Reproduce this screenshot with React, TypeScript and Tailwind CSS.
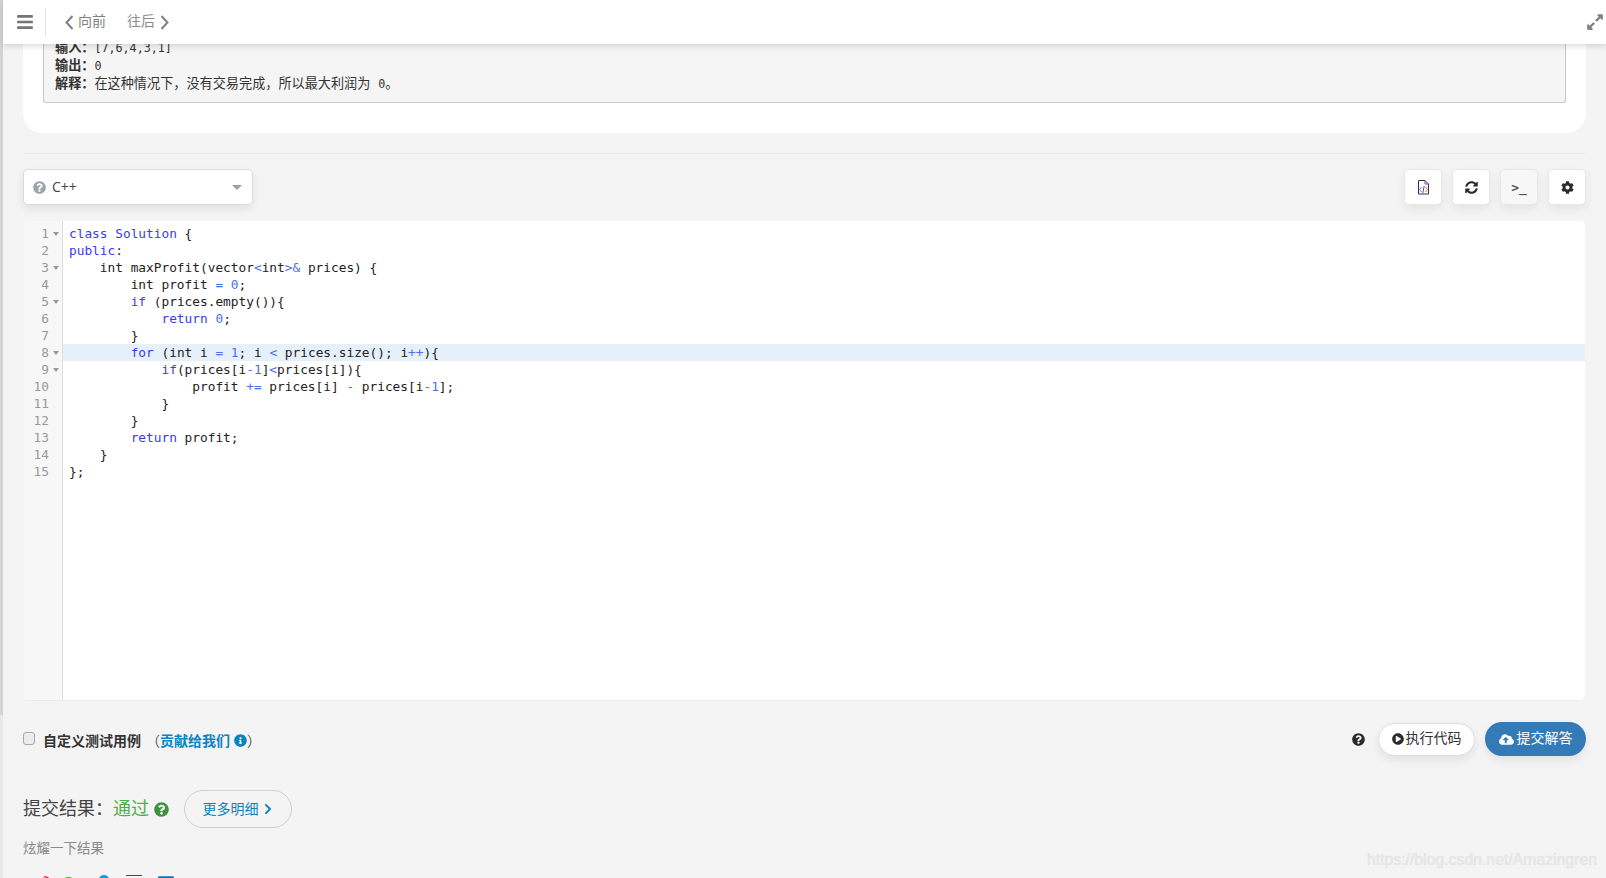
import React from "react";
import { FaBars, FaQuestionCircle, FaSyncAlt, FaCog, FaPlayCircle, FaCloudUploadAlt, FaChevronRight, FaInfoCircle, FaWeibo, FaWeixin, FaQq, FaLinkedin, FaExpandAlt } from "react-icons/fa";

const K = ({ c }: { c: string }) => <span className="text-[#3a3af0]">{c}</span>;
const N = ({ c }: { c: string }) => <span className="text-[#4a6fe8]">{c}</span>;
const L = ({ c }: { c: string }) => <span className="text-[11.7px]">{c}</span>;

const COLON = "\uFF1A";
const COMMA = "\uFF0C";
const LP = "\uFF08";
const RP = "\uFF09";

const lines: React.ReactNode[] = [
  <><K c="class" /> <K c="Solution" /> {"{"}</>,
  <><K c="public" />:</>,
  <>{"    int maxProfit(vector"}<N c="<" />int<N c=">&" />{" prices) {"}</>,
  <>{"        int profit "}<N c="=" /> <N c="0" />;</>,
  <>{"        "}<K c="if" />{" (prices.empty()){"}</>,
  <>{"            "}<K c="return" /> <N c="0" />;</>,
  <>{"        }"}</>,
  <>{"        "}<K c="for" />{" (int i "}<N c="=" /> <N c="1" />{"; i "}<N c="<" />{" prices.size(); i"}<N c="++" />{"){"}</>,
  <>{"            "}<K c="if" />{"(prices[i"}<N c="-1" />{"]"}<N c="<" />{"prices[i]){"}</>,
  <>{"                profit "}<N c="+=" />{" prices[i] "}<N c="-" />{" prices[i"}<N c="-1" />{"];"}</>,
  <>{"            }"}</>,
  <>{"        }"}</>,
  <>{"        "}<K c="return" />{" profit;"}</>,
  <>{"    }"}</>,
  <>{"};"}</>,
];
const folds = [1, 3, 5, 8, 9];

const FileCode = () => (
  <svg width="13" height="15" viewBox="0 0 13 15" fill="none">
    <path d="M1.5 .5h6.5l3.5 3.5v10h-10z" stroke="#3b2a55" strokeWidth="1" />
    <path d="M8 .5v3.5h3.5" stroke="#8a3fa0" strokeWidth="1" />
    <path d="M4.5 7l-2 2.5 2 2.5" stroke="#4a7fc0" strokeWidth="1" />
    <path d="M8.5 7l2 2.5-2 2.5" stroke="#c07a3a" strokeWidth="1" />
    <path d="M7.2 6l-1.4 7" stroke="#4a5a9a" strokeWidth="1" />
  </svg>
);

const Chevron = ({ right, className }: { right?: boolean; className: string }) => (
  <svg width="9" height="15" viewBox="0 0 9 15" fill="none" className={className}>
    <path d={right ? "M1.5 1L7.5 7.5L1.5 14" : "M7.5 1L1.5 7.5L7.5 14"} stroke="#808080" strokeWidth="2" />
  </svg>
);

const ToolBtn = ({ children, dim }: { children: React.ReactNode; dim?: boolean }) => (
  <div className={`w-[38px] h-[36px] rounded-[5px] border border-[#e8e8e8] flex items-center justify-center shadow-[0_4px_10px_rgba(0,0,0,0.07)] ${dim ? "bg-[#f7f7f7]" : "bg-white"}`}>
    {children}
  </div>
);

export default function App() {
  return (
    <div className="relative h-[878px] overflow-hidden flex bg-[#f4f4f4] text-[#333]" style={{ fontFamily: '"Open Sans","Noto Sans CJK SC",sans-serif' }}>
      <div className="w-[3px] shrink-0 flex flex-col">
        <div className="h-[715px] bg-[#d4d4d4]" />
        <div className="flex-1 bg-[#e9e9e9]" />
      </div>
      <div className="flex-1 min-w-0 flex flex-col">
        <header className="relative z-10 h-[44px] shrink-0 bg-white shadow-[0_2px_6px_rgba(0,0,0,0.15)] flex items-center text-[#808080]">
          <FaBars className="ml-[13px] w-[18px] h-[18px] text-[#757575]" />
          <div className="ml-[11px] w-px h-[29px] bg-[#e5e5e5]" />
          <Chevron className="ml-[19px]" />
          <span className="ml-[4px] pb-[3px] text-[14px]">向前</span>
          <span className="ml-[21px] pb-[3px] text-[14px] text-[#8c8c8c]">往后</span>
          <Chevron right className="ml-[5px]" />
          <FaExpandAlt className="ml-auto mr-[2px] w-[18px] h-[18px] text-[#808080]" />
        </header>

        <main className="pl-[20px] pr-[20px] flex-1 flex flex-col">
          <section className="bg-white rounded-b-[20px] h-[89px] px-[20px] shrink-0">
            <pre className="h-[59px] overflow-hidden bg-[#f5f5f5] border-b border-l border-r border-[#c6c6c6] rounded-b-[3px] pl-[11px] text-[13.15px] text-[#333]" style={{ fontFamily: '"DejaVu Sans Mono","Noto Sans CJK SC",monospace' }}>
              <div className="h-[17.8px] leading-[17.8px] -mt-[5px]"><b>{"输入" + COLON}</b><L c="[7,6,4,3,1]" /></div>
              <div className="h-[17.8px] leading-[17.8px]"><b>{"输出" + COLON}</b><L c="0" /></div>
              <div className="h-[17.8px] leading-[17.8px]"><b>{"解释" + COLON}</b>{"在这种情况下" + COMMA + "没有交易完成" + COMMA + "所以最大利润为 "}<L c="0" />。</div>
            </pre>
          </section>

          <div className="mt-[20px] border-t border-[#ececec] pt-[15px] flex justify-between shrink-0">
            <div className="w-[230px] h-[36px] bg-white rounded-[5px] border border-[#dcdcdc] shadow-[0_4px_10px_rgba(0,0,0,0.08)] flex items-center pl-[9px] pr-[10px]">
              <FaQuestionCircle className="w-[13px] h-[13px] text-[#9aa5a8]" />
              <span className="ml-[6px] pb-[1px] text-[14px] text-[#444]">C++</span>
              <span className="ml-auto w-0 h-0 border-l-[5px] border-r-[5px] border-t-[5px] border-l-transparent border-r-transparent border-t-[#a0a0a0]" />
            </div>
            <div className="flex gap-[10px]">
              <ToolBtn><FileCode /></ToolBtn>
              <ToolBtn><FaSyncAlt className="w-[13px] h-[13px] text-[#2b2b2b]" /></ToolBtn>
              <ToolBtn dim><span className="text-[13px] font-bold leading-none text-[#555]" style={{ fontFamily: '"DejaVu Sans Mono",monospace' }}>&gt;_</span></ToolBtn>
              <ToolBtn><FaCog className="w-[13px] h-[13px] text-[#2b2b2b]" /></ToolBtn>
            </div>
          </div>

          <div className="mt-[16px] mx-[1px] h-[480px] shrink-0 bg-white rounded-[5px] border-b border-[#ebebeb] flex overflow-hidden">
            <div className="w-[39px] shrink-0 bg-[#f7f7f7] border-r border-[#dedede] pt-[4px] text-[12.8px] leading-[17px] text-[#999]" style={{ fontFamily: '"DejaVu Sans Mono",monospace' }}>
              {lines.map((_, i) => (
                <div key={i} className="h-[17px] flex items-center justify-end pr-[3px]">
                  <span>{i + 1}</span>
                  <span className={`ml-[4px] w-0 h-0 border-l-[3px] border-r-[3px] border-t-[4px] border-l-transparent border-r-transparent ${folds.includes(i + 1) ? "border-t-[#999]" : "border-t-transparent"}`} />
                </div>
              ))}
            </div>
            <div className="flex-1 pt-[4px] text-[12.8px] leading-[17px] text-[#222]" style={{ fontFamily: '"DejaVu Sans Mono",monospace' }}>
              {lines.map((l, i) => (
                <div key={i} className={`h-[17px] pl-[6px] whitespace-pre ${i === 7 ? "bg-[#e6f0fb]" : ""}`}>{l}</div>
              ))}
            </div>
          </div>

          <div className="mt-[21px] flex items-center justify-between shrink-0 h-[34px]">
            <div className="flex items-center text-[14px]">
              <span className="w-[12px] h-[13px] rounded-[3px] border border-[#aaa] bg-[#ececec] -mt-[2px]" />
              <span className="ml-[8px] font-bold text-[#333] mt-[2px]">自定义测试用例</span>
              <span className="ml-[5px] text-[#0a84c1] font-bold mt-[2px] flex items-center">
                <span className="font-normal text-[#555]">{LP}</span>贡献给我们
                <FaInfoCircle className="ml-[4px] w-[13px] h-[13px]" />
                <span className="font-normal text-[#555]">{RP}</span>
              </span>
            </div>
            <div className="flex items-center">
              <FaQuestionCircle className="w-[13px] h-[13px] text-[#2b2b2b]" />
              <div className="ml-[13px] w-[97px] h-[33px] rounded-full bg-white border border-[#dedede] shadow-[0_4px_10px_rgba(0,0,0,0.08)] flex items-center justify-center text-[14px] text-[#333]">
                <FaPlayCircle className="w-[12px] h-[12px] mr-[2px] text-[#2b2b2b]" /><span className="pb-[3px]">执行代码</span>
              </div>
              <div className="ml-[10px] w-[101px] h-[34px] rounded-full bg-[#337ab7] shadow-[0_4px_10px_rgba(0,0,0,0.08)] flex items-center justify-center text-[14px] text-white">
                <FaCloudUploadAlt className="w-[15px] h-[15px] mr-[3px]" /><span className="pb-[3px]">提交解答</span>
              </div>
            </div>
          </div>

          <div className="mt-[34px] flex items-center shrink-0 h-[38px]">
            <span className="pb-[2px] text-[18px] text-[#444]">{"提交结果" + COLON}</span>
            <span className="pb-[2px] text-[18px] text-[#4cae4c]">通过</span>
            <FaQuestionCircle className="ml-[5px] w-[15px] h-[15px] text-[#3d9140]" />
            <div className="ml-[15px] w-[108px] h-[38px] rounded-full border border-[#d0d0d0] flex items-center justify-center text-[14px] text-[#0a84c1]">
              <span className="pb-[2px]">更多明细</span>
              <FaChevronRight className="ml-[3px] w-[12px] h-[12px]" />
            </div>
          </div>

          <div className="mt-[11px] text-[13.5px] leading-[18px] text-[#8a8a8a] shrink-0">炫耀一下结果</div>

          <div className="mt-[18px] flex items-start shrink-0 h-[20px]">
            <FaWeibo className="ml-[9px] w-[18px] h-[18px] text-[#e6162d]" />
            <FaWeixin className="ml-[12px] w-[18px] h-[18px] text-[#2dc100]" />
            <FaQq className="ml-[16px] w-[16px] h-[18px] text-[#0a9be0]" />
            <div className="ml-[14px] w-[16px] h-[18px] border-t border-[#0a6b2d]" />
            <FaLinkedin className="ml-[15px] w-[18px] h-[18px] text-[#0077b5]" />
          </div>
        </main>
      </div>
      <div className="absolute right-[9px] top-[849px] text-[15.8px] leading-[22px] text-[#e8e8e8] pointer-events-none" style={{ fontFamily: '"Liberation Sans",sans-serif', textShadow: "0 0 1px #d8d8d8" }}>
        https://blog.csdn.net/Amazingren
      </div>
    </div>
  );
}
